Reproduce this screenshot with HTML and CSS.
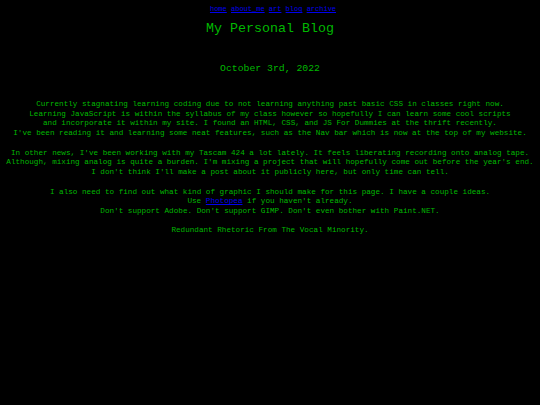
FILE: index.html
```html
<!DOCTYPE html>
<html>
<head>
<meta charset="utf-8">
<link rel="stylesheet" href="styles.css">
</head>
<body>
<div class="page">
  <nav class="nav"><a href="#">home</a> <a href="#">about_me</a> <a href="#">art</a> <a href="#">blog</a> <a href="#">archive</a></nav>
  <h1 class="title">My Personal Blog</h1>
  <h2 class="date">October 3rd, 2022</h2>
  <p class="para">Currently stagnating learning coding due to not learning anything past basic CSS in classes right now.<br>Learning JavaScript is within the syllabus of my class however so hopefully I can learn some cool scripts<br>and incorporate it within my site. I found an HTML, CSS, and JS For Dummies at the thrift recently.<br>I've been reading it and learning some neat features, such as the Nav bar which is now at the top of my website.</p>
  <p class="para">In other news, I've been working with my Tascam 424 a lot lately. It feels liberating recording onto analog tape.<br>Although, mixing analog is quite a burden. I'm mixing a project that will hopefully come out before the year's end.<br>I don't think I'll make a post about it publicly here, but only time can tell.</p>
  <p class="para">I also need to find out what kind of graphic I should make for this page. I have a couple ideas.<br>Use <a href="#">Photopea</a> if you haven't already.<br>Don't support Adobe. Don't support GIMP. Don't even bother with Paint.NET.</p>
  <p class="para">Redundant Rhetoric From The Vocal Minority.</p>
</div>
</body>
</html>
```
FILE: styles.css
```css
html, body {
  margin: 0;
  padding: 0;
  background: #000;
}
.page {
  font-family: "Liberation Mono", "Courier New", monospace;
  color: #00b800;
  text-align: center;
  width: 540px;
  height: 405px;
  overflow: hidden;
}
.nav {
  font-size: 7px;
  line-height: 10px;
  margin: 4px 0 0 6px;
}
.nav a, .para a {
  color: #0000ee;
}
.title {
  font-size: 13.33px;
  font-weight: normal;
  line-height: 16px;
  margin: 7px 0 0;
}
.date {
  font-size: 9.8px;
  font-weight: normal;
  line-height: 12px;
  margin: 26px 0 0;
}
.para {
  font-size: 7.65px;
  line-height: 9.7px;
  margin: 25px 0 0;
}
.para + .para {
  margin-top: 9.8px;
}
```
